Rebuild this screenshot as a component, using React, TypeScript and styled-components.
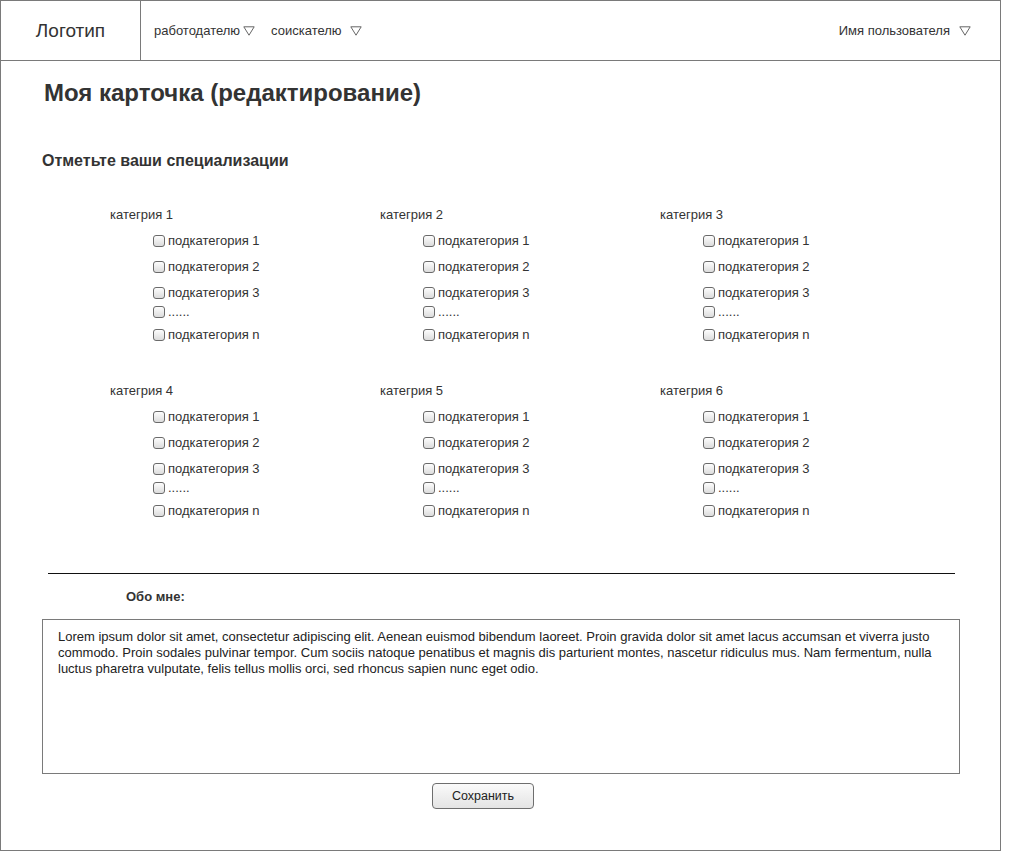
import React from "react";
import styled, { createGlobalStyle } from "styled-components";

const GlobalStyle = createGlobalStyle`
  body {
    margin: 0;
    background: #fff;
    font-family: "Liberation Sans", Arial, sans-serif;
    color: #333;
  }
`;

const Frame = styled.div`
  width: 1001px;
  height: 851px;
  box-sizing: border-box;
  border: 1px solid #7a7a7a;
  display: flex;
  flex-direction: column;
`;

const Header = styled.header`
  height: 60px;
  box-sizing: border-box;
  border-bottom: 1px solid #7a7a7a;
  display: flex;
  align-items: center;
`;

const Logo = styled.div`
  width: 140px;
  height: 100%;
  box-sizing: border-box;
  border-right: 1px solid #7a7a7a;
  display: flex;
  align-items: center;
  justify-content: center;
  font-size: 19px;
  color: #333;
`;

const Nav = styled.nav`
  flex: 1;
  display: flex;
  align-items: center;
  padding-left: 13px;
  padding-right: 29px;
`;

const NavItem = styled.div<{ $gap: number; $after: number }>`
  display: flex;
  align-items: center;
  gap: ${(p) => p.$gap}px;
  margin-right: ${(p) => p.$after}px;
  font-size: 13px;
  color: #333;
`;

const Spacer = styled.div`
  flex: 1;
`;

const Arrow = () => (
  <svg width="12" height="10" viewBox="0 0 12 10">
    <polygon points="0.8,0.8 11.2,0.8 6,9.2" fill="none" stroke="#666" strokeWidth="1" />
  </svg>
);

const Content = styled.main`
  display: flex;
  flex-direction: column;
`;

const Title = styled.h1`
  margin: 18px 0 0 43px;
  font-size: 24px;
  line-height: 28px;
  font-weight: bold;
  color: #333;
`;

const SubTitle = styled.h2`
  margin: 45px 0 0 41px;
  font-size: 16px;
  line-height: 18px;
  font-weight: bold;
  color: #333;
`;

const Categories = styled.div`
  display: grid;
  grid-template-columns: 270px 280px 1fr;
  row-gap: 42px;
  padding-left: 109px;
  margin-top: 38px;
`;

const Category = styled.div`
  display: flex;
  flex-direction: column;
`;

const CategoryName = styled.div`
  font-size: 13px;
  line-height: 14px;
  color: #333;
`;

const Item = styled.label<{ $top: number }>`
  display: flex;
  align-items: center;
  margin-top: ${(p) => p.$top}px;
  margin-left: 43px;
  font-size: 13px;
  line-height: 14px;
  color: #333;
`;

const Box = styled.input`
  appearance: none;
  margin: 0 3px 0 0;
  width: 12px;
  height: 12px;
  box-sizing: border-box;
  border: 1px solid #6a6a6a;
  border-radius: 3px;
  background: linear-gradient(#fdfdfd, #dcdcdc);
`;

const Divider = styled.hr`
  margin: 55px 0 0 47px;
  width: 907px;
  border: 0;
  border-top: 1px solid #111;
`;

const AboutLabel = styled.div`
  margin: 15px 0 0 125px;
  font-size: 13px;
  line-height: 16px;
  font-weight: bold;
  color: #333;
`;

const About = styled.div`
  margin: 14px 0 0 41px;
  width: 918px;
  height: 155px;
  box-sizing: border-box;
  border: 1px solid #7a7a7a;
  padding: 9px 6px 0 15px;
  font-size: 13px;
  line-height: 16px;
  color: #222;
`;

const ButtonRow = styled.div`
  display: flex;
  padding-left: 431px;
  margin-top: 9px;
`;

const Button = styled.button`
  width: 102px;
  height: 26px;
  border: 1px solid #6e6e6e;
  border-radius: 4px;
  background: linear-gradient(#fafafa, #e4e4e4);
  font-family: "Liberation Sans", Arial, sans-serif;
  font-size: 12.5px;
  color: #222;
  padding: 0;
`;

const items = [
  { text: "подкатегория 1", top: 12 },
  { text: "подкатегория 2", top: 12 },
  { text: "подкатегория 3", top: 12 },
  { text: "......", top: 5 },
  { text: "подкатегория n", top: 9 },
];

const App = () => {
  const cats = [1, 2, 3, 4, 5, 6];
  return (
    <>
      <GlobalStyle />
      <Frame>
        <Header>
          <Logo>Логотип</Logo>
          <Nav>
            <NavItem $gap={3} $after={16}>
              работодателю <Arrow />
            </NavItem>
            <NavItem $gap={8} $after={0}>
              соискателю <Arrow />
            </NavItem>
            <Spacer />
            <NavItem $gap={9} $after={0}>
              Имя пользователя <Arrow />
            </NavItem>
          </Nav>
        </Header>
        <Content>
          <Title>Моя карточка (редактирование)</Title>
          <SubTitle>Отметьте ваши специализации</SubTitle>
          <Categories>
            {cats.map((c) => (
              <Category key={c}>
                <CategoryName>категрия {c}</CategoryName>
                {items.map((it, i) => (
                  <Item key={i} $top={it.top}>
                    <Box type="checkbox" />
                    {it.text}
                  </Item>
                ))}
              </Category>
            ))}
          </Categories>
          <Divider />
          <AboutLabel>Обо мне:</AboutLabel>
          <About>
            Lorem ipsum dolor sit amet, consectetur adipiscing elit. Aenean euismod bibendum laoreet. Proin gravida dolor sit amet lacus accumsan et viverra justo commodo. Proin sodales pulvinar tempor. Cum sociis natoque penatibus et magnis dis parturient montes, nascetur ridiculus mus. Nam fermentum, nulla luctus pharetra vulputate, felis tellus mollis orci, sed rhoncus sapien nunc eget odio.
          </About>
          <ButtonRow>
            <Button>Сохранить</Button>
          </ButtonRow>
        </Content>
      </Frame>
    </>
  );
};

export default App;
